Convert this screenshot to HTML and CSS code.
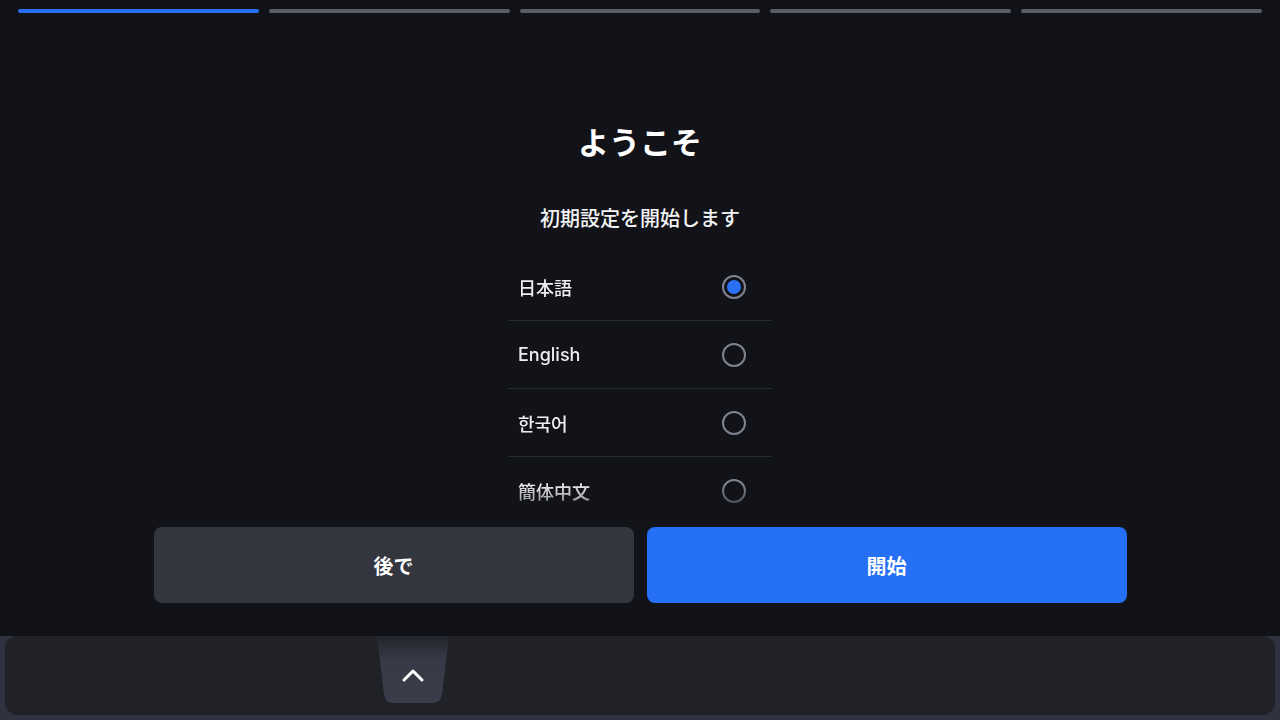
FILE: index.html
```html
<!DOCTYPE html>
<html lang="ja">
<head>
<meta charset="utf-8">
<title>ようこそ</title>
<link rel="stylesheet" href="styles.css">
</head>
<body>
<div class="screen">
  <main class="main">
    <div class="progress">
      <span class="seg active"></span>
      <span class="seg"></span>
      <span class="seg"></span>
      <span class="seg"></span>
      <span class="seg"></span>
    </div>
    <h1 class="title">ようこそ</h1>
    <p class="subtitle">初期設定を開始します</p>
    <div class="lang-list">
      <div class="lang-row">
        <span class="lang-name">日本語</span>
        <span class="radio checked"><span class="dot"></span></span>
      </div>
      <div class="lang-row">
        <span class="lang-name">English</span>
        <span class="radio"></span>
      </div>
      <div class="lang-row">
        <span class="lang-name">한국어</span>
        <span class="radio"></span>
      </div>
      <div class="lang-row">
        <span class="lang-name">簡体中文</span>
        <span class="radio"></span>
      </div>
    </div>
    <div class="actions">
      <button class="btn btn-secondary">後で</button>
      <button class="btn btn-primary">開始</button>
    </div>
  </main>
  <footer class="dock">
    <div class="dock-panel">
      <div class="handle">
        <svg width="72" height="67" viewBox="0 0 72 67">
          <defs>
            <linearGradient id="hg" x1="0" y1="0" x2="0" y2="1">
              <stop offset="0" stop-color="#23252b"/>
              <stop offset="0.35" stop-color="#363a46"/>
              <stop offset="1" stop-color="#3a3e4b"/>
            </linearGradient>
          </defs>
          <path d="M0 0 H72 L65 58 Q64 67 55 67 H17 Q8 67 7 58 Z" fill="url(#hg)"/>
          <path d="M27 44 L36 35 L45 44" fill="none" stroke="#ffffff" stroke-width="3" stroke-linecap="round" stroke-linejoin="round"/>
        </svg>
      </div>
    </div>
  </footer>
</div>
</body>
</html>
```

FILE: styles.css
```css
html, body {
  margin: 0;
  padding: 0;
}
body {
  width: 1280px;
  height: 720px;
  overflow: hidden;
  background: #121318;
  font-family: "Inter", "Noto Sans CJK JP", sans-serif;
  color: #ffffff;
}
.screen {
  display: flex;
  flex-direction: column;
  height: 720px;
}
.main {
  height: 636px;
  display: flex;
  flex-direction: column;
  align-items: center;
}
.progress {
  align-self: stretch;
  display: flex;
  gap: 10px;
  padding: 9px 18px 0;
}
.seg {
  flex: 1;
  height: 4px;
  border-radius: 2px;
  background: #5a5c68;
}
.seg.active {
  background: #2a6ff5;
}
.title {
  margin: 110px 0 0;
  font-size: 31px;
  line-height: 40px;
  font-weight: 700;
}
.subtitle {
  margin: 42px 0 0;
  font-size: 20px;
  line-height: 28px;
  font-weight: 500;
  color: #f2f3f5;
}
.lang-list {
  margin-top: 20px;
  width: 264px;
  height: 272px;
  overflow: hidden;
  -webkit-mask-image: linear-gradient(to bottom, #000 0, #000 85%, rgba(0,0,0,0.1) 100%);
  mask-image: linear-gradient(to bottom, #000 0, #000 85%, rgba(0,0,0,0.1) 100%);
}
.lang-row {
  height: 67px;
  border-bottom: 1px solid #2a2c33;
  display: flex;
  align-items: center;
  justify-content: space-between;
  padding: 0 26px 0 10px;
}
.lang-name {
  font-size: 18px;
  font-weight: 500;
  color: #eceef2;
}
.radio {
  width: 24px;
  height: 24px;
  box-sizing: border-box;
  border: 2px solid #80838f;
  border-radius: 50%;
  display: flex;
  align-items: center;
  justify-content: center;
}
.radio .dot {
  width: 14px;
  height: 14px;
  border-radius: 50%;
  background: #2a70f5;
}
.actions {
  margin-top: 2px;
  display: flex;
  gap: 13px;
}
.btn {
  width: 480px;
  height: 76px;
  border: none;
  border-radius: 8px;
  font-family: "Noto Sans CJK JP", sans-serif;
  font-size: 20px;
  font-weight: 700;
  color: #ffffff;
}
.btn-secondary {
  background: #33353f;
}
.btn-primary {
  background: #2670f5;
}
.dock {
  flex: 1;
  background: #2f333f;
  padding: 0 5px 5px;
  display: flex;
}
.dock-panel {
  flex: 1;
  background: #212227;
  border-radius: 12px;
  position: relative;
}
.handle {
  position: absolute;
  left: 372px;
  top: 0;
  width: 72px;
  height: 67px;
}
.handle svg {
  display: block;
}
```
